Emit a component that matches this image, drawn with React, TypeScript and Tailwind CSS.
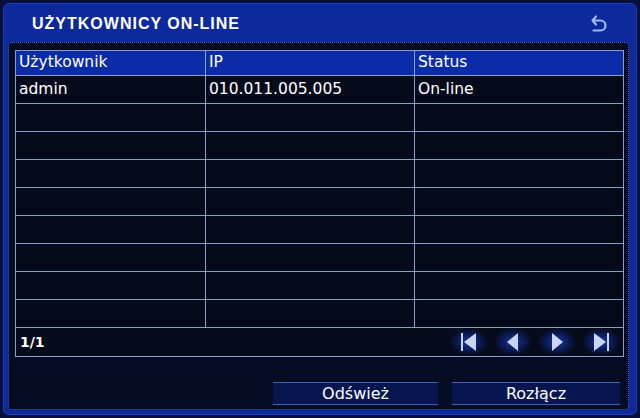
import React from 'react';

const rows = [
  { user: 'admin', ip: '010.011.005.005', status: 'On-line' },
  ...Array.from({ length: 8 }, () => ({ user: '', ip: '', status: '' })),
];

function BackIcon() {
  return (
    <svg width="18" height="20" viewBox="0 0 18 20" fill="none">
      <path d="M6 2.5 L2.5 6.5 L6 10.5" stroke="#9fb8ff" strokeWidth="2.2" strokeLinecap="round" strokeLinejoin="round" />
      <path d="M3 6.5 H10.5 A5 5 0 0 1 10.5 16.5 H3.5" stroke="#9fb8ff" strokeWidth="2.2" strokeLinecap="round" />
    </svg>
  );
}

function PageIcon({ kind }: { kind: 'first' | 'prev' | 'next' | 'last' }) {
  const c = '#c9d5f2';
  return (
    <svg width="18" height="20" viewBox="0 0 18 20">
      {kind === 'first' && (
        <>
          <rect x="1" y="1" width="2" height="18" fill={c} />
          <polygon points="16,1 4,10 16,19" fill={c} />
        </>
      )}
      {kind === 'prev' && <polygon points="14,1 3,10 14,19" fill={c} />}
      {kind === 'next' && <polygon points="4,1 15,10 4,19" fill={c} />}
      {kind === 'last' && (
        <>
          <polygon points="2,1 14,10 2,19" fill={c} />
          <rect x="15" y="1" width="2" height="18" fill={c} />
        </>
      )}
    </svg>
  );
}

export default function App() {
  return (
    <div
      className="w-[640px] h-[418px] bg-[#06103a] p-[3px] text-white"
      style={{ fontFamily: '"DejaVu Sans", "Liberation Sans", sans-serif' }}
    >
      <div className="h-full flex flex-col rounded-[6px] bg-[#0c2a9c] border border-[#1d40b8]">
        <div className="h-[38px] flex items-center justify-between pl-[28px] pr-[28px] pt-[1px]">
          <span className="text-[16px] tracking-[1px] font-bold font-['Liberation_Sans',sans-serif]">
            UŻYTKOWNICY ON-LINE
          </span>
          <BackIcon />
        </div>

        <div className="flex-1 ml-[4px] mr-[7px] mb-[4px] rounded-[4px] bg-[#050c24] border border-dotted border-[#4a68d0] pl-[6px] pr-[4px] pt-[7px] flex flex-col">
          <div className="border border-[#8b9dc9] text-[15.5px]">
            <div className="grid grid-cols-[190px_209px_1fr] h-[25px] bg-[#0b2ca6] border-b border-[#8b9dc9]">
              <div className="pl-[3px] flex items-center border-r border-[#8b9dc9]">Użytkownik</div>
              <div className="pl-[3px] flex items-center border-r border-[#8b9dc9]">IP</div>
              <div className="pl-[3px] flex items-center">Status</div>
            </div>
            {rows.map((r, i) => (
              <div key={i} className="grid grid-cols-[190px_209px_1fr] h-[28px] bg-[#060b1c] border-b border-[#8b9dc9]">
                <div className="pl-[3px] flex items-center border-r border-[#8b9dc9]">{r.user}</div>
                <div className="pl-[3px] flex items-center border-r border-[#8b9dc9]">{r.ip}</div>
                <div className="pl-[3px] flex items-center">{r.status}</div>
              </div>
            ))}
            <div className="h-[28px] flex items-center justify-between bg-[#060b1c] pl-[4px] pr-[4px]">
              <span className="font-bold text-[14px]">1/1</span>
              <div className="flex items-center gap-[8px]">
                {(['first', 'prev', 'next', 'last'] as const).map((k) => (
                  <div
                    key={k}
                    className="w-[36px] h-[26px] flex items-center justify-center bg-[radial-gradient(ellipse_at_center,#1b3a9e_0%,#0a1a55_45%,transparent_75%)]"
                  >
                    <PageIcon kind={k} />
                  </div>
                ))}
              </div>
            </div>
          </div>

          <div className="flex justify-end gap-[14px] mt-[25px] pr-[4px]">
            <button className="w-[165px] h-[23px] flex items-center justify-center bg-[#071650] border-y border-[#4360b8] text-[16px] text-white">
              Odśwież
            </button>
            <button className="w-[168px] h-[23px] flex items-center justify-center bg-[#071650] border-y border-[#4360b8] text-[16px] text-white">
              Rozłącz
            </button>
          </div>
        </div>
      </div>
    </div>
  );
}
